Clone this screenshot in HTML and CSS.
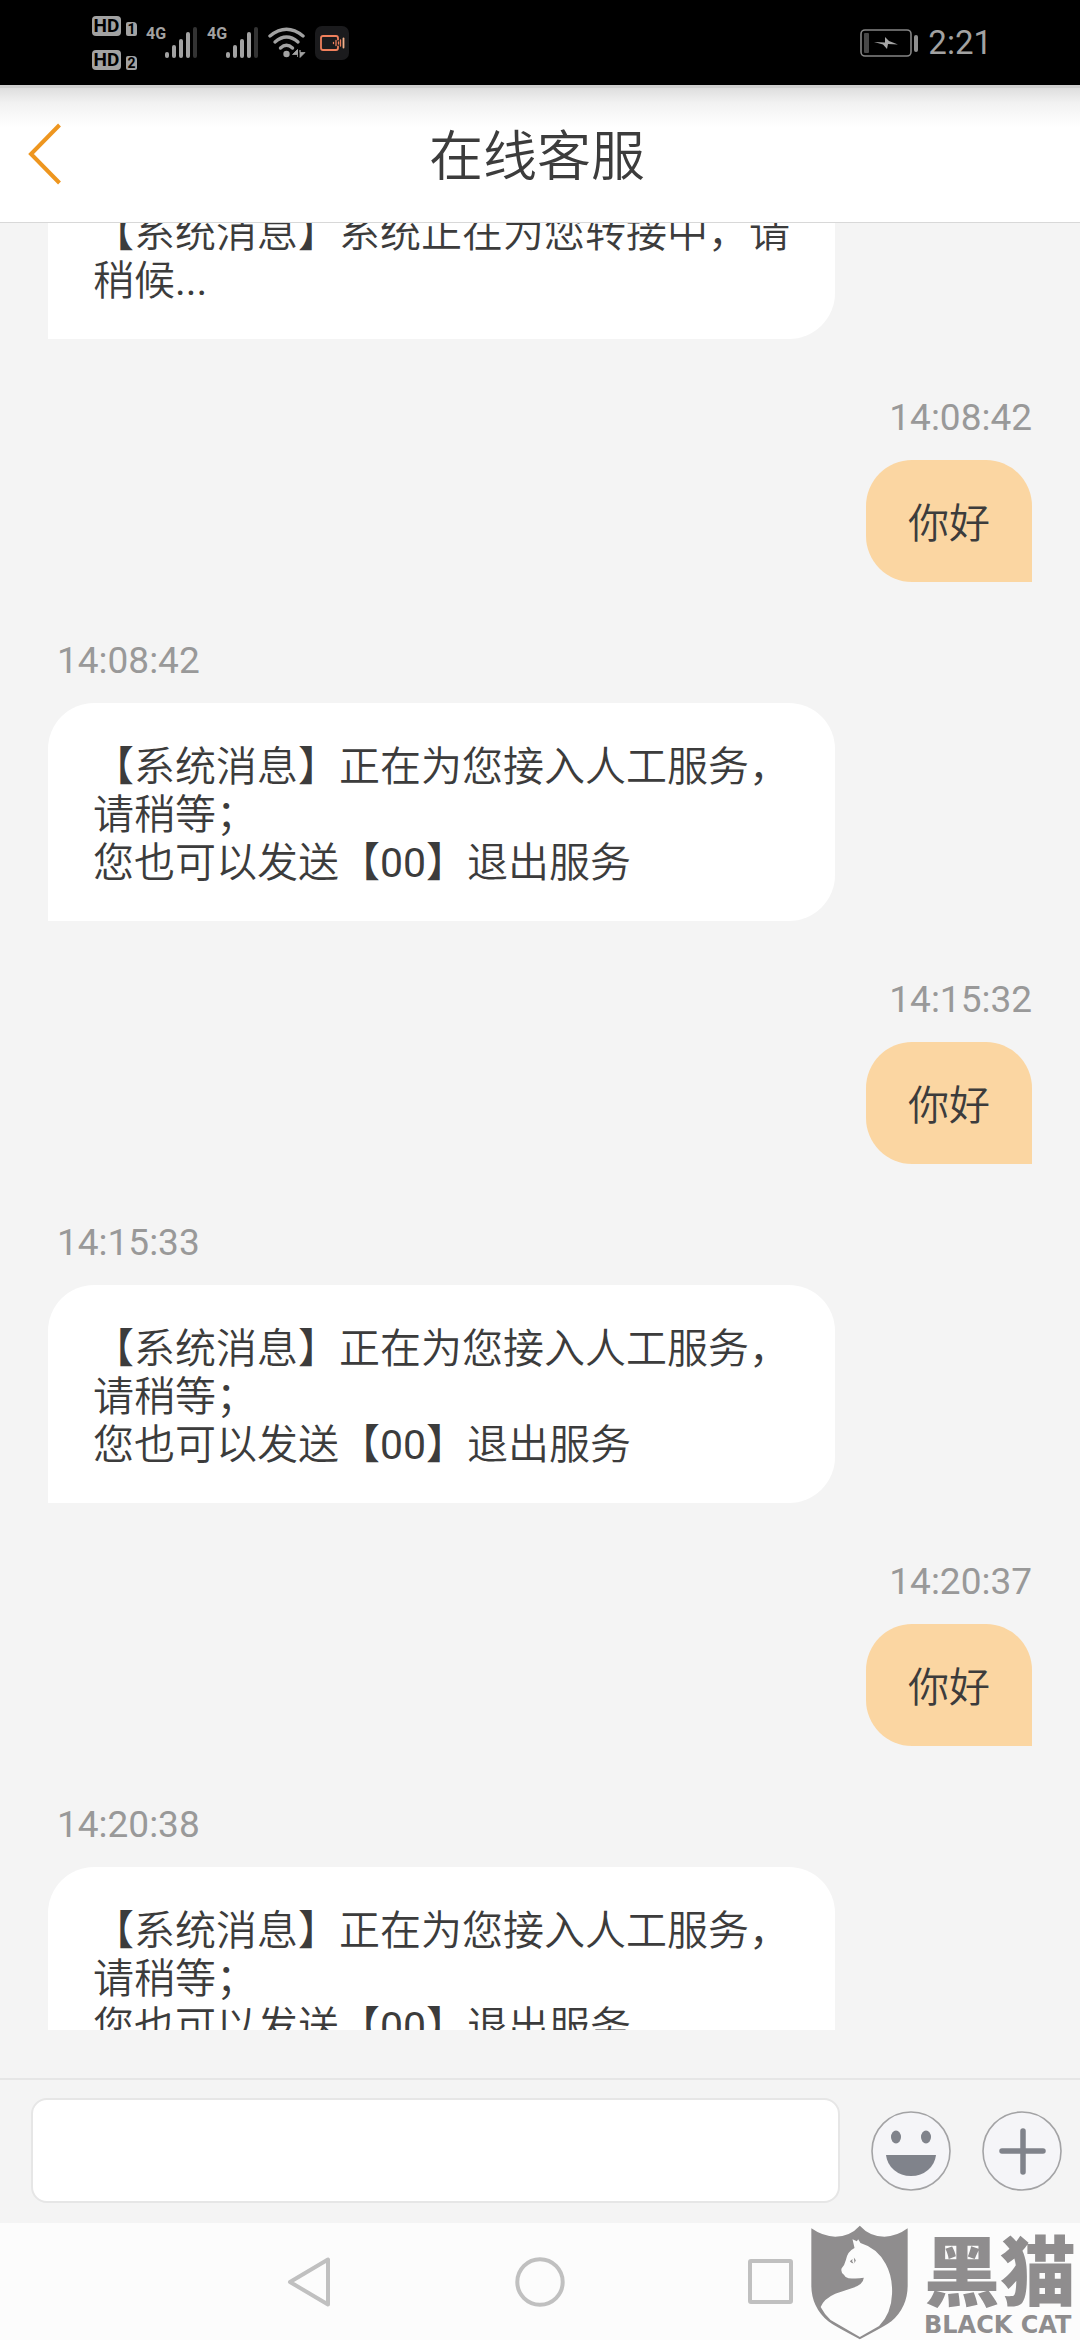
FILE: index.html
```html
<!DOCTYPE html>
<html lang="zh-CN">
<head>
<meta charset="utf-8">
<meta name="viewport" content="width=device-width, initial-scale=1">
<title>在线客服</title>
<link rel="stylesheet" href="styles.css">
</head>
<body>
<div class="status">
  <div class="status-side">
    <div class="hd-list">
      <div class="hd-row"><span class="hd">HD</span><span class="sim">1</span></div>
      <div class="hd-row"><span class="hd">HD</span><span class="sim">2</span></div>
    </div>
    <div class="signal">
      <span class="net">4G</span>
      <svg width="33" height="31" viewBox="0 0 33 31"><g fill="#a2a2a2"><rect x="0" y="25" width="4" height="6" rx="2"/><rect x="7" y="18" width="4" height="13" rx="2"/><rect x="14" y="12" width="4" height="19" rx="2"/><rect x="21" y="5" width="4" height="26" rx="2"/></g><rect x="28" y="0" width="4" height="31" rx="2" fill="#333"/></svg>
    </div>
    <div class="signal">
      <span class="net">4G</span>
      <svg width="33" height="31" viewBox="0 0 33 31"><g fill="#a2a2a2"><rect x="0" y="25" width="4" height="6" rx="2"/><rect x="7" y="18" width="4" height="13" rx="2"/><rect x="14" y="12" width="4" height="19" rx="2"/><rect x="21" y="5" width="4" height="26" rx="2"/></g><rect x="28" y="0" width="4" height="31" rx="2" fill="#333"/></svg>
    </div>
    <svg width="38" height="31" viewBox="0 0 38 31"><g fill="none" stroke="#a2a2a2" stroke-width="3.4" stroke-linecap="round"><path d="M2 9Q18.500-4.500 35 9"/><path d="M7 15Q18.500 5 30 15"/><path d="M12.500 21Q18.500 15.500 24.500 21"/></g><circle cx="18.500" cy="27" r="3.200" fill="#a2a2a2"/><path d="M29.500 23v7M29.500 22.500l-5 5h5zM32 23v7.500l5-5h-5z" fill="#a2a2a2" stroke="#a2a2a2" stroke-width=".8"/></svg>
    <svg width="34" height="34" viewBox="0 0 34 34"><rect width="34" height="34" rx="7" fill="#1b1b1d"/><g fill="none" stroke="#f0805c" stroke-width="1.800" stroke-linecap="round"><path d="M23 13.500V12q0-2-2-2H8q-2 0-2 2v10q0 2 2 2h13q2 0 2-2v-1.500"/><path d="M18.500 16.500v1M21 14.500v5M23.500 16v2M25.500 14v6" stroke-width="1.300"/><path d="M28.500 12.500v9" stroke="#f2b08a"/></g></svg>
  </div>
  <div class="status-side">
    <svg width="59" height="28" viewBox="0 0 59 28"><rect x="1" y="1" width="50" height="26" rx="4" fill="none" stroke="#858585" stroke-width="1.600"/><rect x="4" y="4" width="5" height="20" rx="1" fill="#484848"/><path d="M14 13l11 .5V8l4 4 9 3.500-10-.5-1 5-4-4.500z" fill="#a6a6a6"/><rect x="54" y="6" width="4" height="17" rx="2" fill="#8f8f8f"/></svg>
    <time class="clock">2:21</time>
  </div>
</div>

<header class="header">
  <button class="back" type="button" aria-label="返回"><svg width="34" height="62" viewBox="0 0 34 62"><path d="M31.500 2L3 31l28.500 29" fill="none" stroke="#ee961f" stroke-width="4"/></svg></button>
  <h1 class="title">在线客服</h1>
</header>

<main class="chat">
  <div class="thread">
    <section class="msg"><p class="bubble">【系统消息】系统正在为您转接中，请稍候<span class="latin">...</span></p></section>
    <section class="msg mine"><time class="stamp">14:08:42</time><p class="bubble">你好</p></section>
    <section class="msg"><time class="stamp">14:08:42</time><p class="bubble">【系统消息】正在为您接入人工服务，请稍等；<br>您也可以发送【<span class="latin">00</span>】退出服务</p></section>
    <section class="msg mine"><time class="stamp">14:15:32</time><p class="bubble">你好</p></section>
    <section class="msg"><time class="stamp">14:15:33</time><p class="bubble">【系统消息】正在为您接入人工服务，请稍等；<br>您也可以发送【<span class="latin">00</span>】退出服务</p></section>
    <section class="msg mine"><time class="stamp">14:20:37</time><p class="bubble">你好</p></section>
    <section class="msg"><time class="stamp">14:20:38</time><p class="bubble">【系统消息】正在为您接入人工服务，请稍等；<br>您也可以发送【<span class="latin">00</span>】退出服务</p></section>
  </div>
</main>

<form class="composer">
  <input class="field" type="text" aria-label="输入消息">
  <button class="round" type="button" aria-label="表情"><svg width="80" height="80" viewBox="0 0 80 80"><circle cx="40" cy="40" r="39" fill="#f5f5f8" stroke="#a3a3a5" stroke-width="1.600"/><g fill="#80838b"><ellipse cx="25" cy="26" rx="5" ry="6.500"/><ellipse cx="55" cy="26" rx="5" ry="6.500"/><path d="M15 44h50q-1 9-8 15-7 6-17 6t-17-6q-7-6-8-15z"/></g></svg></button>
  <button class="round" type="button" aria-label="更多"><svg width="80" height="80" viewBox="0 0 80 80"><circle cx="40" cy="40" r="39" fill="#f5f5f8" stroke="#a3a3a5" stroke-width="1.600"/><path d="M20 40h41M41 20v41" stroke="#80838b" stroke-width="5.500" stroke-linecap="round"/></svg></button>
</form>

<nav class="nav">
  <button class="key" type="button" aria-label="后退"><svg width="52" height="52" viewBox="0 0 52 52"><path d="M45 3.500v45L7 26z"/></svg></button>
  <button class="key" type="button" aria-label="主屏幕"><svg width="52" height="52" viewBox="0 0 52 52"><circle cx="26" cy="26" r="22.700"/></svg></button>
  <button class="key" type="button" aria-label="最近任务"><svg width="52" height="52" viewBox="0 0 52 52"><rect x="5" y="5" width="41" height="41" rx="1"/></svg></button>
  <div class="mark">
    <svg width="97" height="115" viewBox="33 44 292 344"><path fill="#8f8d8e" d="M34 53Q70 78 106 78 150 78 180 45 210 78 254 78 290 78 324 53V225Q324 290 275 333 262 344 180 387 98 344 85 333 34 290 34 225z"/><path fill="#fcfcfc" d="M158 86L171 92 175 86 182 97Q232 112 258 160 279 198 277 250 275 310 238 347L180 380 92 329Q72 310 62 290 72 265 106 250L160 232Q190 222 192 202 170 206 146 203 136 202 132 193 122 185 125 174 134 164 138 148 143 122 164 112z"/><path fill="#8f8d8e" d="M150 152l8-7-1 7 4 7q-7-1-11-7zM162 141l6 8-4 9-1-8z"/></svg>
    <div class="mark-words"><span class="mark-cn">黑猫</span><span class="mark-en">BLACK CAT</span></div>
  </div>
</nav>
</body>
</html>
```
FILE: styles.css
```css
* { box-sizing: border-box; margin: 0; padding: 0; }

body {
  display: flex;
  flex-direction: column;
  height: 100vh;
  overflow: hidden;
  background: #f4f4f4;
  color: #3c3c3c;
  font-family: Roboto, "Noto Sans CJK SC", sans-serif;
}

button { border: 0; background: none; }
svg { display: block; }

.status {
  flex: none;
  display: flex;
  justify-content: space-between;
  align-items: center;
  height: 85px;
  padding: 0 88px 0 92px;
  background: #000;
  color: #a2a2a2;
}
.status-side { display: flex; align-items: center; gap: 9px; }
.hd-list { display: flex; flex-direction: column; gap: 14px; }
.hd-row { display: flex; align-items: flex-end; gap: 5px; }
.hd, .sim {
  background: #a2a2a2;
  color: #000;
  font-weight: 700;
  text-align: center;
}
.hd { width: 29px; height: 20px; border-radius: 4px; font-size: 19px; line-height: 20px; }
.sim { width: 11px; height: 14px; border-radius: 2px 4px 2px 2px; font-size: 14px; line-height: 14px; }
.signal { display: flex; align-items: flex-start; }
.net { width: 19px; font-size: 16px; font-weight: 700; line-height: 14px; }
.clock { font-size: 33px; line-height: 40px; }

.header {
  flex: none;
  display: grid;
  grid-template-columns: 1fr auto 1fr;
  align-items: center;
  height: 138px;
  border-bottom: 1px solid #d8d8d8;
  background: linear-gradient(#cfcfcf 0, #cfcfcf 3px, #dedede 3px, #f2f2f2 18px, #fff 42px);
}
.back { justify-self: start; padding-left: 28px; }
.title { padding: 8px 6px 0 0; font-size: 54px; font-weight: 350; line-height: 64px; }

.chat { flex: 1; min-height: 0; margin-bottom: 48px; overflow: hidden; }
.thread {
  display: flex;
  flex-direction: column;
  gap: 54px;
  margin-top: -54px;
  padding: 0 48px;
}
.msg { display: flex; flex-direction: column; align-items: flex-start; gap: 18px; }
.stamp { padding: 1px 0 0 9px; color: #999; font-size: 37px; line-height: 48px; }
.bubble {
  width: 80%;
  padding: 40px 40px 34px 45px;
  border-radius: 46px 46px 46px 0;
  background: #fff;
  font-size: 41px;
  font-weight: 350;
  line-height: 48px;
}
.latin { font-weight: 400; }
.mine { align-items: flex-end; }
.mine .bubble {
  width: auto;
  max-width: 80%;
  padding: 40px 42px 34px;
  border-radius: 46px 46px 0 46px;
  background: #fbd6a2;
}

.composer {
  flex: none;
  display: flex;
  align-items: center;
  gap: 31px;
  padding: 18px 18px 20px 31px;
  border-top: 2px solid #e6e6e6;
}
.field {
  flex: 1;
  min-width: 0;
  height: 105px;
  padding: 0 24px;
  border: 2px solid #e6e6e6;
  border-radius: 16px;
  background: #fff;
  font: inherit;
  font-size: 41px;
}

.nav {
  flex: none;
  position: relative;
  display: flex;
  justify-content: center;
  align-items: center;
  gap: 179px;
  height: 117px;
  background: #fcfcfc;
}
.key svg { fill: none; stroke: #c0c0c0; stroke-width: 4; stroke-linejoin: round; }
.mark {
  position: absolute;
  right: 2px;
  bottom: 0;
  display: flex;
  gap: 16px;
  color: #8f8d8e;
}
.mark-words { display: flex; flex-direction: column; gap: 4px; width: 154px; }
.mark-cn { font-family: "Noto Sans CJK SC", sans-serif; font-size: 76px; font-weight: 900; line-height: 84px; }
.mark-en { font-family: "DejaVu Sans", sans-serif; font-size: 24px; font-weight: 700; line-height: 24px; white-space: nowrap; }
```
